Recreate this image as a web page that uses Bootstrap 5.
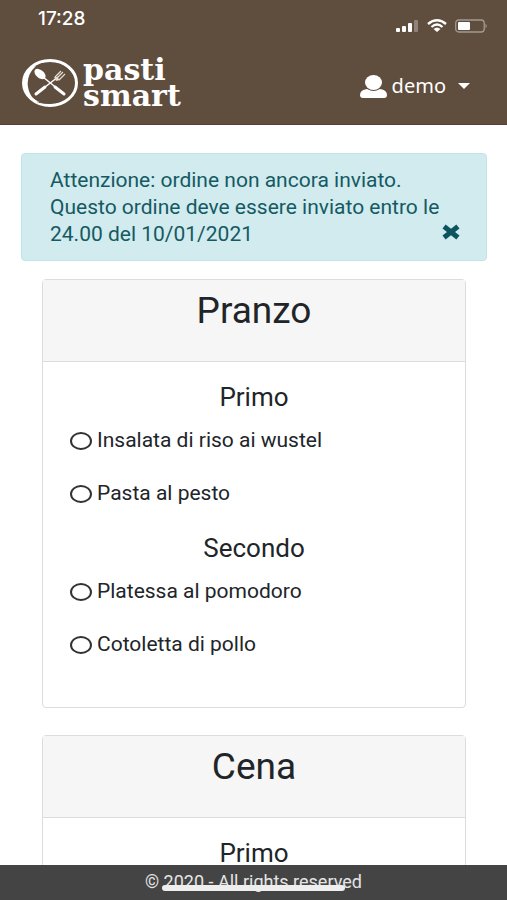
<!DOCTYPE html>
<html lang="it">
<head>
<meta charset="utf-8">
<meta name="viewport" content="width=device-width, initial-scale=1">
<title>Pasti Smart</title>
<link href="https://cdn.jsdelivr.net/npm/bootstrap@5.3.0/dist/css/bootstrap.min.css" rel="stylesheet">
<style>
body { font-family: Roboto, "Liberation Sans", sans-serif; font-size: 21px; line-height: 27px; color: #212529; background: #fff; }
.top-bar { background: #5f4d3e; color: #fff; border-bottom: 1px solid #5a3c34; }
.status-row { height: 52px; padding: 5px 19px 0 38px; }
.status-time { font: 500 19px/27px Inter, sans-serif; }
.status-icons { gap: 8px; padding-top: 14px; }
.brand-row { height: 72px; padding: 0 37px 10px 21px; }
.brand-name { font: 700 30px/26px "DejaVu Serif", serif; }
.brand-link { gap: 4px; }
.user-menu { gap: 5px; color: #fff; font-family: "Noto Sans", sans-serif; font-size: 20px; padding: 6px 0 0; border: 0; }
.user-menu::after { margin-left: 7px; border-top-width: 6px; border-left-width: 6px; border-right-width: 6px; }
.page-main { min-height: 0; padding: 28px 20px 0 21px; scrollbar-width: none; }
.page-main::-webkit-scrollbar { display: none; }
.notice { background: #d1ebef; border: 1px solid #bee5eb; color: #155a62; border-radius: 4px; padding: 13px 28px 12px; margin-bottom: 18px; }
.notice-close { right: 26px; bottom: 20px; line-height: 0; }
.meal { margin: 0 21px 27px; border: 1px solid #dcdcdc; border-radius: 4px; }
.meal-head { background: #f6f6f6; border-bottom: 1px solid #dcdcdc; padding: 11px 20px 30px; }
.meal-head h2 { font-size: 37px; line-height: 40px; font-weight: 400; }
.meal-body { padding: 20px 27px 23px; }
.meal-body h3 { font-size: 26px; line-height: 30px; font-weight: 400; margin-bottom: 15px; }
.dish { gap: 5px; margin-bottom: 26px; }
.dish input { appearance: none; width: 22px; height: 18px; border: 2px solid #333; border-radius: 50%; background: #fff; margin: 0; }
.dish input:checked { background: #333; }
.foot { background: #444; color: #e4e4e4; height: 35px; font-size: 18px; line-height: 34px; }
.home-bar { left: 0; right: 0; bottom: 9px; width: 36%; height: 6px; border-radius: 3px; background: #eee; }
</style>
<script src="https://cdn.jsdelivr.net/npm/bootstrap@5.3.0/dist/js/bootstrap.bundle.min.js"></script>
</head>
<body class="d-flex flex-column vh-100 overflow-hidden">
<header class="top-bar flex-shrink-0">
  <div class="status-row d-flex justify-content-between align-items-start">
    <span class="status-time">17:28</span>
    <div class="status-icons d-flex">
      <svg width="24" height="14" viewBox="0 0 24 14" fill="#fff" aria-hidden="true"><rect x="1" y="9" width="4" height="4" rx="1"/><rect x="7" y="7" width="4" height="6" rx="1"/><rect x="13" y="4" width="4" height="9" rx="1"/><rect x="19" y="1" width="4" height="12" rx="1" opacity=".3"/></svg>
      <svg width="20" height="14" viewBox="0 0 20 14" fill="none" stroke="#fff" stroke-width="2.3" aria-hidden="true"><path d="M1 5Q10-2.500 19 5M4.500 8Q10 3 15.500 8"/><path d="M6.500 10Q10 7 13.500 10L10 13Z" fill="#fff" stroke="none"/></svg>
      <svg width="33" height="14" viewBox="0 0 33 14" aria-hidden="true"><rect x=".7" y="1" width="28.500" height="12" rx="3" fill="none" stroke="#a39a91" stroke-width="1.300"/><rect x="3" y="3" width="12" height="8" rx="1" fill="#fff"/><path d="M30.500 4.500Q33 7 30.500 9.500Z" fill="#a39a91"/></svg>
    </div>
  </div>
  <nav class="brand-row d-flex justify-content-between align-items-center" aria-label="Principale">
    <a href="#" class="brand-link d-flex align-items-center text-white text-decoration-none">
      <svg width="58" height="50" viewBox="0 0 58 50" aria-hidden="true">
        <ellipse cx="29" cy="25" rx="26.500" ry="22.500" fill="none" stroke="#fff" stroke-width="3"/>
        <path d="M17 5Q37-2 50 12M12 41Q25 52 42 44" fill="none" stroke="#fff" stroke-width="1.200"/>
        <path d="M20 6Q39 4 48 16M16 44Q31 48 44 40" fill="none" stroke="#5f4d3e" stroke-width="1"/>
        <path d="M4 16Q-1 28 8 38Q14 45 23 47Q9 42 7 29Q5 17 15 8Q7 10 4 16Z" fill="#fff"/>
        <path d="M22 19L43 36" stroke="#fff" stroke-width="1.500"/><path d="M34 29L43 36" stroke="#fff" stroke-width="3" stroke-linecap="round"/>
        <ellipse cx="19" cy="16" rx="6.500" ry="4" transform="rotate(40 19 16)" fill="#fff"/>
        <path d="M37 19L15 36" stroke="#fff" stroke-width="1.500"/><path d="M24 29L15 36" stroke="#fff" stroke-width="3" stroke-linecap="round"/>
        <path d="M33 19L35 23L39 22L36 19Z" fill="#e5ddd5"/>
        <path d="M34 19L40 13M36 20L42 14M38 22L44 16" fill="none" stroke="#e5ddd5" stroke-width="1.200"/>
      </svg>
      <span class="brand-name">pasti<br>smart</span>
    </a>
    <button type="button" class="user-menu btn dropdown-toggle d-flex align-items-center">
      <svg width="27" height="23" viewBox="0 0 27 23" fill="#fff" aria-hidden="true"><ellipse cx="13.500" cy="7.500" rx="8.500" ry="7.500"/><path d="M7 14Q13.500 18 20 14Q27 15 27 20Q27 23 24 23H3Q0 23 0 20Q0 15 7 14Z"/></svg>
      <span>demo</span>
    </button>
  </nav>
</header>
<main class="page-main flex-grow-1 overflow-auto">
  <div class="notice position-relative" role="alert">
    Attenzione: ordine non ancora inviato.<br>Questo ordine deve essere inviato entro le 24.00 del 10/01/2021
    <button type="button" class="notice-close btn p-0 border-0 position-absolute" aria-label="Chiudi">
      <svg width="18" height="16" viewBox="0 0 18 16" aria-hidden="true"><path d="M4 4L14 12M14 4L4 12" stroke="#0c5460" stroke-width="5" stroke-linecap="square"/></svg>
    </button>
  </div>
  <section class="meal">
    <div class="meal-head text-center"><h2 class="m-0">Pranzo</h2></div>
    <div class="meal-body">
      <h3 class="text-center">Primo</h3>
      <div class="dish d-flex align-items-center"><input type="radio" name="primo" id="primo1"><label for="primo1">Insalata di riso ai wustel</label></div>
      <div class="dish d-flex align-items-center"><input type="radio" name="primo" id="primo2"><label for="primo2">Pasta al pesto</label></div>
      <h3 class="text-center">Secondo</h3>
      <div class="dish d-flex align-items-center"><input type="radio" name="secondo" id="secondo1"><label for="secondo1">Platessa al pomodoro</label></div>
      <div class="dish d-flex align-items-center"><input type="radio" name="secondo" id="secondo2"><label for="secondo2">Cotoletta di pollo</label></div>
    </div>
  </section>
  <section class="meal">
    <div class="meal-head text-center"><h2 class="m-0">Cena</h2></div>
    <div class="meal-body"><h3 class="text-center">Primo</h3></div>
  </section>
</main>
<footer class="foot flex-shrink-0 text-center position-relative">© 2020 - All rights reserved<div class="home-bar position-absolute mx-auto"></div></footer>
</body>
</html>
